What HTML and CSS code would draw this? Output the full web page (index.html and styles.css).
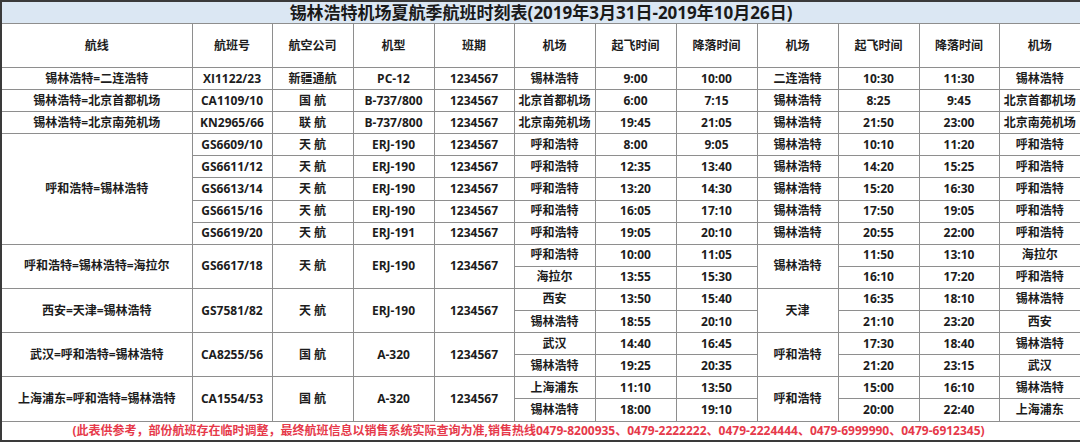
FILE: index.html
```html
<!DOCTYPE html>
<html lang="zh-CN">
<head>
<meta charset="utf-8">
<title>锡林浩特机场夏航季航班时刻表</title>
<link rel="stylesheet" href="styles.css">
</head>
<body>
<table class="sched">
  <colgroup>
    <col class="c-route">
    <col class="c-80"><col class="c-81"><col class="c-81"><col class="c-80">
    <col class="c-81"><col class="c-81"><col class="c-81"><col class="c-81">
    <col class="c-81"><col class="c-80"><col class="c-last">
  </colgroup>
  <tbody>
    <tr class="r-title"><td colspan="12" class="title">锡林浩特机场夏航季航班时刻表(2019年3月31日-2019年10月26日)</td></tr>
    <tr class="r-head">
      <td>航线</td><td>航班号</td><td>航空公司</td><td>机型</td><td>班期</td><td>机场</td><td>起飞时间</td><td>降落时间</td><td>机场</td><td>起飞时间</td><td>降落时间</td><td>机场</td>
    </tr>
    <tr class="r">
      <td>锡林浩特=二连浩特</td><td>XI1122/23</td><td>新疆通航</td><td>PC-12</td><td>1234567</td><td>锡林浩特</td><td>9:00</td><td>10:00</td><td>二连浩特</td><td>10:30</td><td>11:30</td><td>锡林浩特</td>
    </tr>
    <tr class="r">
      <td>锡林浩特=北京首都机场</td><td>CA1109/10</td><td>国 航</td><td>B-737/800</td><td>1234567</td><td>北京首都机场</td><td>6:00</td><td>7:15</td><td>锡林浩特</td><td>8:25</td><td>9:45</td><td>北京首都机场</td>
    </tr>
    <tr class="r">
      <td>锡林浩特=北京南苑机场</td><td>KN2965/66</td><td>联 航</td><td>B-737/800</td><td>1234567</td><td>北京南苑机场</td><td>19:45</td><td>21:05</td><td>锡林浩特</td><td>21:50</td><td>23:00</td><td>北京南苑机场</td>
    </tr>
    <tr class="r">
      <td rowspan="5">呼和浩特=锡林浩特</td><td>GS6609/10</td><td>天 航</td><td>ERJ-190</td><td>1234567</td><td>呼和浩特</td><td>8:00</td><td>9:05</td><td>锡林浩特</td><td>10:10</td><td>11:20</td><td>呼和浩特</td>
    </tr>
    <tr class="r">
      <td>GS6611/12</td><td>天 航</td><td>ERJ-190</td><td>1234567</td><td>呼和浩特</td><td>12:35</td><td>13:40</td><td>锡林浩特</td><td>14:20</td><td>15:25</td><td>呼和浩特</td>
    </tr>
    <tr class="r">
      <td>GS6613/14</td><td>天 航</td><td>ERJ-190</td><td>1234567</td><td>呼和浩特</td><td>13:20</td><td>14:30</td><td>锡林浩特</td><td>15:20</td><td>16:30</td><td>呼和浩特</td>
    </tr>
    <tr class="r">
      <td>GS6615/16</td><td>天 航</td><td>ERJ-190</td><td>1234567</td><td>呼和浩特</td><td>16:05</td><td>17:10</td><td>锡林浩特</td><td>17:50</td><td>19:05</td><td>呼和浩特</td>
    </tr>
    <tr class="r">
      <td>GS6619/20</td><td>天 航</td><td>ERJ-191</td><td>1234567</td><td>呼和浩特</td><td>19:05</td><td>20:10</td><td>锡林浩特</td><td>20:55</td><td>22:00</td><td>呼和浩特</td>
    </tr>
    <tr class="r">
      <td rowspan="2">呼和浩特=锡林浩特=海拉尔</td><td rowspan="2">GS6617/18</td><td rowspan="2">天 航</td><td rowspan="2">ERJ-190</td><td rowspan="2">1234567</td><td>呼和浩特</td><td>10:00</td><td>11:05</td><td rowspan="2">锡林浩特</td><td>11:50</td><td>13:10</td><td>海拉尔</td>
    </tr>
    <tr class="r">
      <td>海拉尔</td><td>13:55</td><td>15:30</td><td>16:10</td><td>17:20</td><td>呼和浩特</td>
    </tr>
    <tr class="r">
      <td rowspan="2">西安=天津=锡林浩特</td><td rowspan="2">GS7581/82</td><td rowspan="2">天 航</td><td rowspan="2">ERJ-190</td><td rowspan="2">1234567</td><td>西安</td><td>13:50</td><td>15:40</td><td rowspan="2">天津</td><td>16:35</td><td>18:10</td><td>锡林浩特</td>
    </tr>
    <tr class="r">
      <td>锡林浩特</td><td>18:55</td><td>20:10</td><td>21:10</td><td>23:20</td><td>西安</td>
    </tr>
    <tr class="r">
      <td rowspan="2">武汉=呼和浩特=锡林浩特</td><td rowspan="2">CA8255/56</td><td rowspan="2">国 航</td><td rowspan="2">A-320</td><td rowspan="2">1234567</td><td>武汉</td><td>14:40</td><td>16:45</td><td rowspan="2">呼和浩特</td><td>17:30</td><td>18:40</td><td>锡林浩特</td>
    </tr>
    <tr class="r">
      <td>锡林浩特</td><td>19:25</td><td>20:35</td><td>21:20</td><td>23:15</td><td>武汉</td>
    </tr>
    <tr class="r">
      <td rowspan="2">上海浦东=呼和浩特=锡林浩特</td><td rowspan="2">CA1554/53</td><td rowspan="2">国 航</td><td rowspan="2">A-320</td><td rowspan="2">1234567</td><td>上海浦东</td><td>11:10</td><td>13:50</td><td rowspan="2">呼和浩特</td><td>15:00</td><td>16:10</td><td>锡林浩特</td>
    </tr>
    <tr class="r">
      <td>锡林浩特</td><td>18:00</td><td>19:10</td><td>20:00</td><td>22:40</td><td>上海浦东</td>
    </tr>
    <tr class="r-foot">
      <td colspan="12" class="note">(此表供参考，部份航班存在临时调整，最终航班信息以销售系统实际查询为准,销售热线0479-8200935、0479-2222222、0479-2224444、0479-6999990、0479-6912345)</td>
    </tr>
  </tbody>
</table>
</body>
</html>
```

FILE: styles.css
```css
html, body {
  margin: 0;
  padding: 0;
  background: #ffffff;
}

.sched {
  width: 1080px;
  border-collapse: collapse;
  table-layout: fixed;
  border: 2px solid #3a3a3a;
  font-family: "Open Sans", "Noto Sans CJK SC", sans-serif;
  font-weight: 700;
  font-size: 12px;
  color: #1c1c1c;
}

.c-route { width: 191px; }
.c-80 { width: 80px; }
.c-81 { width: 81px; }
.c-last { width: 82px; }

.sched td {
  border: 1px solid #8e8e8e;
  padding: 0;
  text-align: center;
  vertical-align: middle;
  line-height: 1;
  white-space: nowrap;
  overflow: hidden;
}

.r-title td {
  height: 21px;
}

.title {
  background: #dbe7f3;
  font-size: 17px;
  font-weight: 700;
  color: #1a1a1a;
  border-bottom-color: #7d8690;
}

.r-head td {
  height: 43px;
}

.r td {
  height: 21.1px;
}

.r-foot td {
  height: 18px;
}

.note {
  color: #e6394a;
  font-size: 12px;
  font-weight: 700;
  text-indent: -25px;
}
```
